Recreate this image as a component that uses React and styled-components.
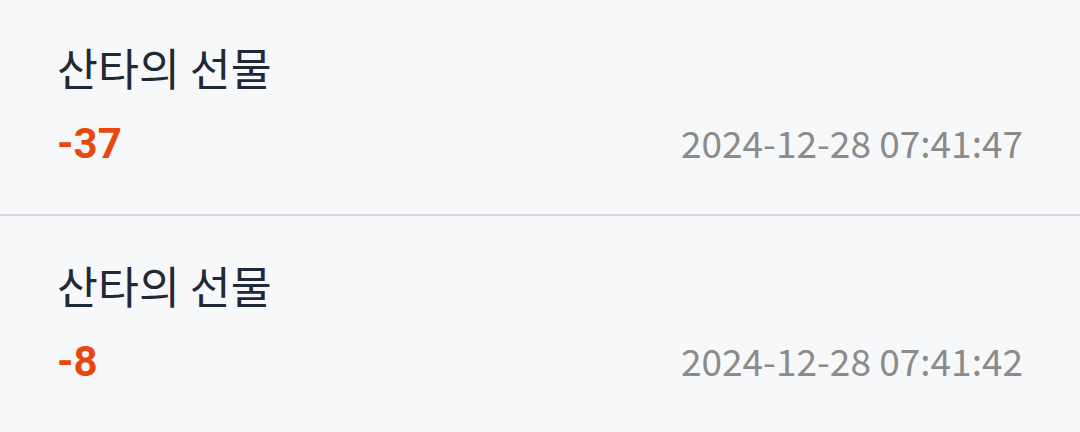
import React from "react";
import styled, { createGlobalStyle } from "styled-components";

const GlobalStyle = createGlobalStyle`
    html, body {
        margin: 0;
        padding: 0;
        background: #f7f8fa;
    }
    body {
        font-family: "Noto Sans CJK KR", "Noto Sans", sans-serif;
        -webkit-font-smoothing: antialiased;
    }
`;

const List = styled.div`
    width: 1080px;
    height: 432px;
    overflow: hidden;
    background: #f7f8fa;
    margin-top: -2px;
`;

const Row = styled.div`
    padding: 38px 57px 42px;
    border-bottom: 2px solid #dadbde;
    &:last-child {
        border-bottom: none;
    }
`;

const Title = styled.div`
    font-size: 44.5px;
    line-height: 62px;
    color: #1f2937;
`;

const Meta = styled.div`
    display: flex;
    justify-content: space-between;
    align-items: baseline;
    margin-top: 16px;
`;

const Amount = styled.span`
    font-family: Roboto, "Liberation Sans", sans-serif;
    font-size: 42px;
    line-height: 56px;
    font-weight: 700;
    color: ${props => (props.negative ? "#e8480e" : "#1a7f37")};
`;

const Time = styled.span`
    font-size: 37px;
    line-height: 56px;
    color: #8b8b8b;
`;

const records = [
    { title: "산타의 선물", amount: -37, time: "2024-12-28 07:41:47" },
    { title: "산타의 선물", amount: -8, time: "2024-12-28 07:41:42" }
];

export default function App() {
    return (
        <>
            <GlobalStyle />
            <List>
                {records.map((r, i) => (
                    <Row key={"record_" + i}>
                        <Title>{r.title}</Title>
                        <Meta>
                            <Amount negative={r.amount < 0}>
                                {r.amount > 0 ? "+" + r.amount : r.amount}
                            </Amount>
                            <Time>{r.time}</Time>
                        </Meta>
                    </Row>
                ))}
            </List>
        </>
    );
}
